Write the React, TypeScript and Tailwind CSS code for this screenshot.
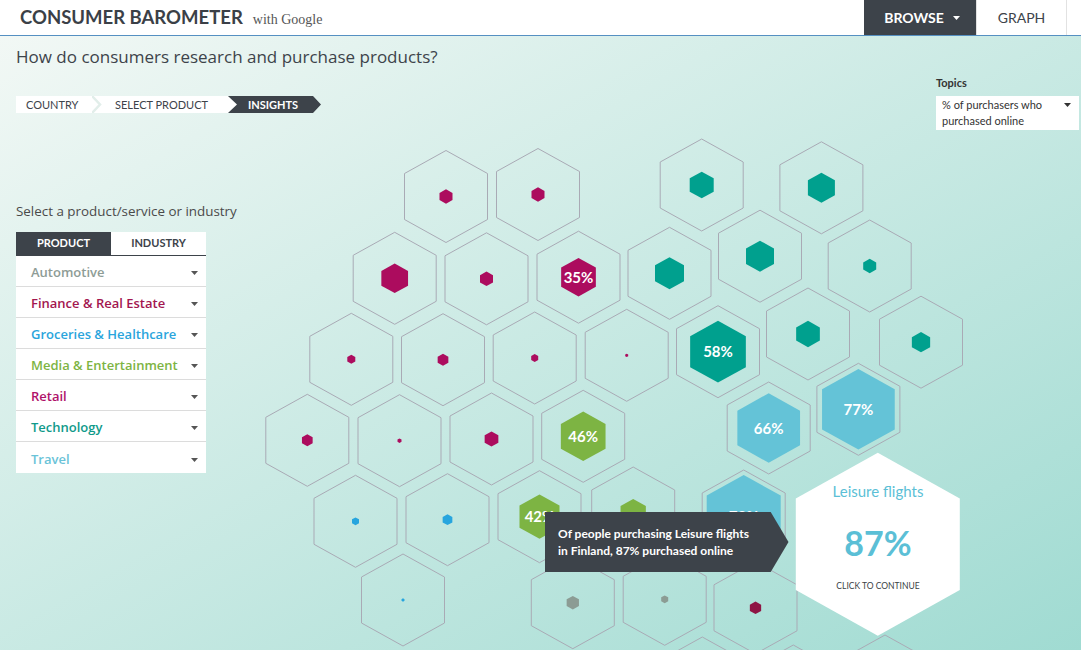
import React from "react";

type Hex = { cx: number; cy: number; iw: number; c: string; label?: string };

const M = "#ac0c5e";
const T = "#00a08e";
const G = "#7db443";
const LB = "#64c3d7";
const B = "#27a5de";
const GR = "#8c9c94";
const DM = "#8e1544";

const hexes: Hex[] = [
  { cx: 446, cy: 196.5, iw: 13, c: M },
  { cx: 538, cy: 194.5, iw: 13, c: M },
  { cx: 701.7, cy: 185, iw: 24, c: T },
  { cx: 821.4, cy: 187.8, iw: 27, c: T },
  { cx: 394.7, cy: 278.3, iw: 26.7, c: M },
  { cx: 486.5, cy: 278.8, iw: 13, c: M },
  { cx: 578.5, cy: 277.2, iw: 34.7, c: M, label: "35%" },
  { cx: 669.5, cy: 273.3, iw: 29, c: T },
  { cx: 760, cy: 256.2, iw: 28, c: T },
  { cx: 869.7, cy: 266, iw: 13, c: T },
  { cx: 351.3, cy: 359.3, iw: 8, c: M },
  { cx: 443, cy: 359.7, iw: 10.7, c: M },
  { cx: 534.7, cy: 358, iw: 7, c: M },
  { cx: 626.7, cy: 355.3, iw: 3, c: M },
  { cx: 718, cy: 351.7, iw: 55.7, c: T, label: "58%" },
  { cx: 808, cy: 334, iw: 23.7, c: T },
  { cx: 921, cy: 342.2, iw: 18.3, c: T },
  { cx: 307.3, cy: 440.3, iw: 10.7, c: M },
  { cx: 399.5, cy: 440.7, iw: 4, c: M },
  { cx: 491.5, cy: 439, iw: 13.7, c: M },
  { cx: 583.2, cy: 436.3, iw: 44.7, c: G, label: "46%" },
  { cx: 768.7, cy: 428, iw: 62.7, c: LB, label: "66%" },
  { cx: 858.4, cy: 409.3, iw: 72.7, c: LB, label: "77%" },
  { cx: 743.7, cy: 516, iw: 74, c: LB, label: "73%" },
  { cx: 355.5, cy: 521.3, iw: 7, c: B },
  { cx: 447.5, cy: 519.7, iw: 9.7, c: B },
  { cx: 539.5, cy: 516.7, iw: 40, c: G, label: "42%" },
  { cx: 633.2, cy: 513, iw: 25.3, c: G },
  { cx: 403, cy: 600, iw: 3, c: B },
  { cx: 572.8, cy: 602.7, iw: 12.3, c: GR },
  { cx: 664.7, cy: 599.3, iw: 7, c: GR },
  { cx: 755.5, cy: 607.8, iw: 11.3, c: DM },
  { cx: 702.3, cy: 683, iw: 0, c: M },
  { cx: 793.3, cy: 691, iw: 0, c: M },
  { cx: 885, cy: 681, iw: 0, c: M },
];

const pts = (cx: number, cy: number, w: number, h: number) =>
  `${cx},${cy - h / 2} ${cx + w / 2},${cy - h / 4} ${cx + w / 2},${cy + h / 4} ${cx},${cy + h / 2} ${cx - w / 2},${cy + h / 4} ${cx - w / 2},${cy - h / 4}`;

const Caret = ({ color = "#555" }: { color?: string }) => (
  <svg width="7" height="4" viewBox="0 0 7 4" className="shrink-0">
    <polygon points="0,0 7,0 3.5,4" fill={color} />
  </svg>
);

const items = [
  { t: "Automotive", c: "text-[#8e9c96]" },
  { t: "Finance & Real Estate", c: "text-[#a3164f]" },
  { t: "Groceries & Healthcare", c: "text-[#2aa5dc]" },
  { t: "Media & Entertainment", c: "text-[#7db443]" },
  { t: "Retail", c: "text-[#b0126a]" },
  { t: "Technology", c: "text-[#109a8a]" },
  { t: "Travel", c: "text-[#6ac3d8]" },
];

function Chart() {
  return (
    <svg width="821" height="520" viewBox="260 130 821 520" className="block shrink-0">
      {hexes.map((h, i) => (
        <polygon key={"o" + i} points={pts(h.cx, h.cy, 83, 92)} fill="none" stroke="#a9aab5" strokeWidth="1" />
      ))}
      {hexes.map((h, i) =>
        h.iw > 0 ? (
          <polygon key={"i" + i} points={pts(h.cx, h.cy, h.iw, (h.iw * 92) / 83)} fill={h.c} />
        ) : null
      )}
      {hexes.map((h, i) =>
        h.label ? (
          <text
            key={"t" + i}
            x={h.cx}
            y={h.cy + 5.5}
            textAnchor="middle"
            fill="#ffffff"
            fontSize="15"
            fontWeight="700"
          >
            {h.label}
          </text>
        ) : null
      )}
      <polygon points="545,512 770.7,512 788.5,542 770.7,572 545,572" fill="#3d434a" />
      <text x="558" y="537.5" fill="#ffffff" fontSize="12" fontWeight="700">
        Of people purchasing Leisure flights
      </text>
      <text x="558" y="555" fill="#ffffff" fontSize="12" fontWeight="700">
        in Finland, 87% purchased online
      </text>
      <polygon points={pts(877.8, 544.3, 164, 183)} fill="#ffffff" />
      <text x="878" y="497.3" textAnchor="middle" fill="#5bbfd6" fontSize="15">
        Leisure flights
      </text>
      <text x="878" y="556" textAnchor="middle" fill="#5bbfd6" fontSize="34" fontWeight="700">
        87%
      </text>
      <text x="878" y="589.3" textAnchor="middle" fill="#3a3f45" fontSize="8.5">
        CLICK TO CONTINUE
      </text>
    </svg>
  );
}

export default function App() {
  return (
    <div className="w-[1081px] h-[650px] overflow-hidden font-['Lato','Liberation_Sans',sans-serif] text-[#3d434a]">
      <header className="h-[36px] bg-white border-b border-[#5590c2] flex">
        <div className="flex items-baseline pl-[20px] pt-[5px]">
          <span className="text-[18.5px] font-bold text-[#3b4047] leading-[24px]">CONSUMER BAROMETER</span>
          <span className="ml-[10px] text-[14px] text-[#555] font-['Liberation_Serif',serif]">with Google</span>
        </div>
        <nav className="ml-auto mr-[14px] flex">
          <div className="w-[112px] bg-[#3d434a] text-white font-bold text-[14px] flex items-center justify-center gap-[9px] pl-[4px]">
            BROWSE
            <Caret color="#ffffff" />
          </div>
          <div className="w-[91px] border-l border-r border-[#e2e2e2] flex items-center justify-center text-[14px] text-[#3d434a]">
            GRAPH
          </div>
        </nav>
      </header>
      <main className="h-[614px] flex flex-col bg-[linear-gradient(to_bottom_right,#f2f8f5,#a0dbd2)]">
        <div className="h-[94px] flex justify-between">
          <div className="pl-[16px] pt-[9px]">
            <h1 className="font-['Open_Sans',sans-serif] text-[17px] leading-[24px] text-[#3d434a]">
              How do consumers research and purchase products?
            </h1>
            <div className="mt-[27px] flex h-[17px] text-[11px] leading-[17px]">
              <div className="bg-white w-[76px] pl-[10px]">COUNTRY</div>
              <svg width="10" height="17" viewBox="0 0 10 17" className="block">
                <rect width="10" height="17" fill="#ffffff" />
                <polyline points="0,0 8,8.5 0,17" fill="none" stroke="#e2eeea" strokeWidth="2.5" />
              </svg>
              <div className="bg-white w-[135px] pl-[13px] [clip-path:polygon(0_0,126px_0,135px_50%,126px_100%,0_100%)]">
                SELECT PRODUCT
              </div>
              <div className="-ml-[9px] w-[93px] bg-[#3d434a] text-white font-bold pl-[20px] [clip-path:polygon(0_0,85px_0,93px_50%,85px_100%,0_100%,9px_50%)]">
                INSIGHTS
              </div>
            </div>
          </div>
          <div className="w-[143px] mr-[2px] pt-[40px]">
            <div className="text-[11px] font-bold leading-[14px] text-[#333]">Topics</div>
            <div className="mt-[6px] bg-white h-[34px] pl-[6px] pr-[8px] pt-[1px] flex text-[11px] leading-[16px] text-[#333]">
              <div className="flex-1">
                % of purchasers who
                <br />
                purchased online
              </div>
              <div className="pt-[6px]">
                <Caret color="#333" />
              </div>
            </div>
          </div>
        </div>
        <div className="flex flex-1">
          <aside className="w-[260px] shrink-0 pl-[16px] pt-[72px] font-['Open_Sans',sans-serif]">
            <div className="text-[13.4px] leading-[18px] text-[#4a4a4a]">Select a product/service or industry</div>
            <div className="mt-[12px] w-[190px] flex h-[24px] border-b border-[#3d434a] text-[11px] font-bold font-['Lato',sans-serif]">
              <div className="w-[95px] bg-[#3d434a] text-white flex items-center justify-center">PRODUCT</div>
              <div className="w-[95px] bg-white text-[#3d434a] flex items-center justify-center">INDUSTRY</div>
            </div>
            <ul className="w-[190px] bg-white">
              {items.map((it, i) => (
                <li
                  key={it.t}
                  className={
                    "h-[31px] flex items-center justify-between pt-[4px] pl-[15px] pr-[8px] text-[13px] font-semibold " +
                    it.c +
                    (i < items.length - 1 ? " border-b border-[#dcdcdc]" : "")
                  }
                >
                  <span>{it.t}</span>
                  <Caret color="#555" />
                </li>
              ))}
            </ul>
          </aside>
          <Chart />
        </div>
      </main>
    </div>
  );
}
